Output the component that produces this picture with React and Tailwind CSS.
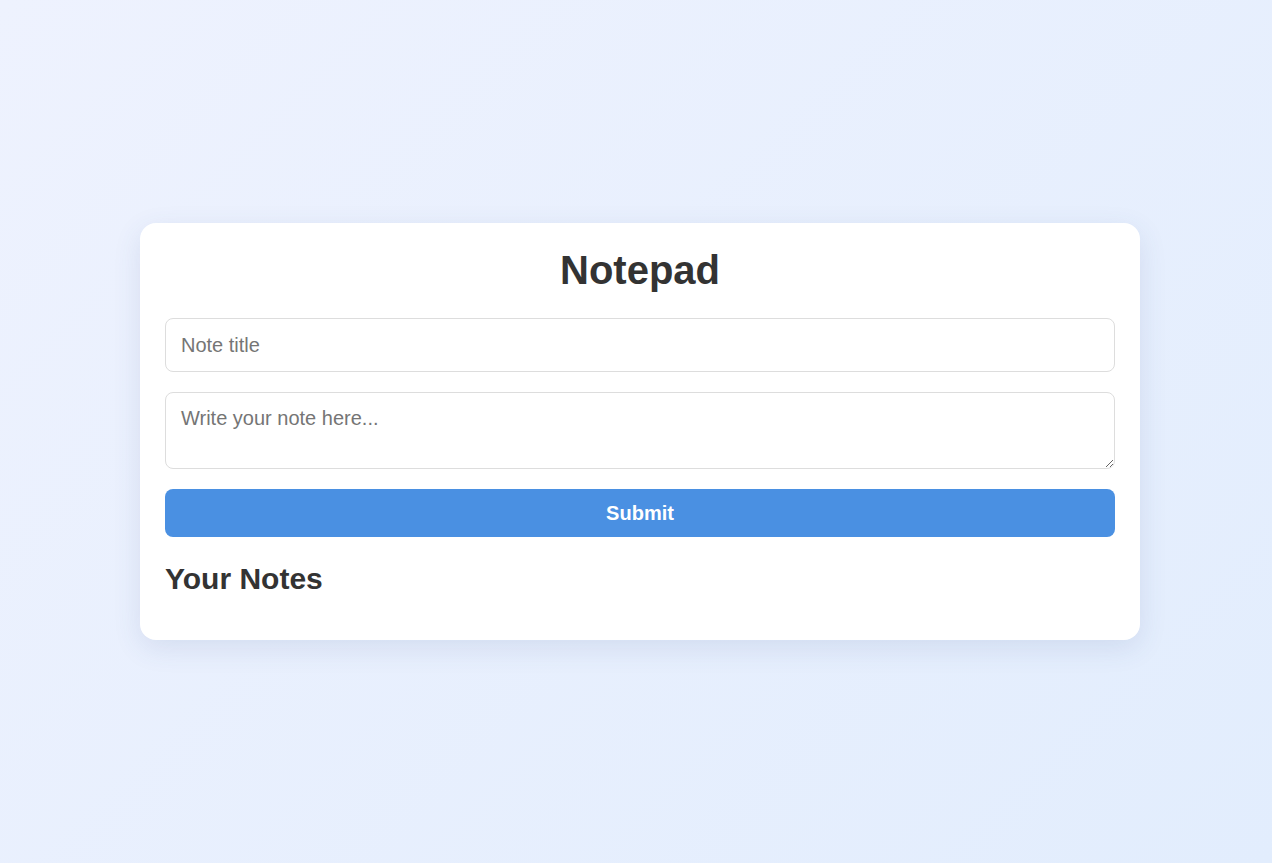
import React, { useState } from 'react';

// Simple notepad: a title input, a note textarea and the list of saved notes
export default function App() {
  const [title, setTitle] = useState('');
  const [body, setBody] = useState('');
  const [notes, setNotes] = useState([]);

  const handleSubmit = (event) => {
    event.preventDefault();
    if (!title.trim() && !body.trim()) return;
    setNotes([...notes, { id: Date.now(), title, body }]);
    setTitle('');
    setBody('');
  };

  return (
    <div
      className="min-h-screen flex items-center justify-start bg-[linear-gradient(135deg,#eef2fe,#e2edfd)] pl-[140px]"
      style={{ fontFamily: '"Liberation Sans", Arial, sans-serif' }}
    >
      <div className="w-[1000px] shrink-0 bg-white rounded-2xl shadow-[0_8px_28px_rgba(60,80,140,0.12)] px-[25px] pt-[24px] pb-[44px]">
        <h1 className="text-[40px] leading-[46px] font-bold text-[#333] text-center mb-[25px]">Notepad</h1>

        <form onSubmit={handleSubmit}>
          <input
            type="text"
            placeholder="Note title"
            value={title}
            onChange={(e) => setTitle(e.target.value)}
            className="block w-full h-[54px] px-[15px] border border-[#ddd] rounded-lg text-[20px] text-[#333] placeholder:text-[#757575] outline-none mb-[20px]"
          />
          <textarea
            placeholder="Write your note here..."
            rows={2}
            value={body}
            onChange={(e) => setBody(e.target.value)}
            className="block w-full h-[77px] px-[15px] py-[14px] border border-[#ddd] rounded-lg text-[20px] leading-[23px] text-[#333] placeholder:text-[#757575] outline-none mb-[20px]"
          />
          <button
            type="submit"
            className="block w-full h-[48px] bg-[#4a90e2] text-white font-bold text-[20px] rounded-lg"
          >
            Submit
          </button>
        </form>

        <h2 className="text-[30px] leading-[34px] font-bold text-[#333] mt-[25px]">Your Notes</h2>
        {notes.map((note) => (
          <div key={note.id} className="mt-3 p-4 border border-[#ddd] rounded-lg">
            <div className="font-bold text-[#333]">{note.title}</div>
            <div className="text-[#555]">{note.body}</div>
          </div>
        ))}
      </div>
    </div>
  );
}
